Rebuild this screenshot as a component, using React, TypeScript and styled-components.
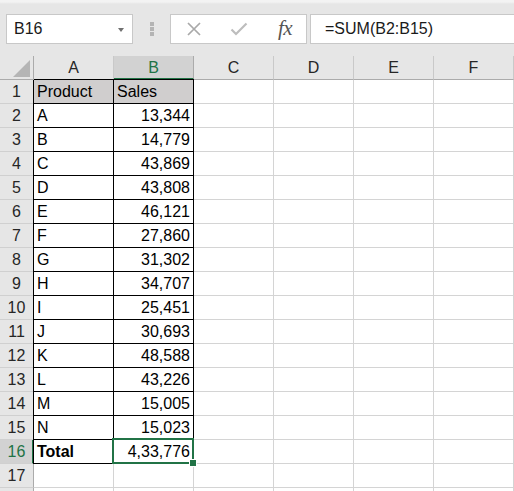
import React from "react";
import styled, { createGlobalStyle } from "styled-components";

const GlobalStyle = createGlobalStyle`
  html, body {
    margin: 0;
    padding: 0;
    background: #ffffff;
    overflow: hidden;
  }
  body {
    font-family: "Liberation Sans", Arial, sans-serif;
  }
`;

const GREEN = "#217346";
const GRID = "#d4d4d4";

const Page = styled.div`
  width: 514px;
  height: 491px;
  overflow: hidden;
  display: flex;
  flex-direction: column;
`;

const Toolbar = styled.div`
  flex-shrink: 0;
  height: 56px;
  box-sizing: border-box;
  padding: 14px 0 0 6px;
  display: flex;
  align-items: flex-start;
  background: linear-gradient(#f3f3f3 0, #f3f3f3 2px, #e6e6e6 4px);
`;

const Field = styled.div`
  height: 30px;
  box-sizing: border-box;
  background: #ffffff;
  border: 1px solid #c8c8c8;
  display: flex;
  align-items: center;
  font-size: 16px;
  color: #1a1a1a;
`;

const NameBox = styled(Field)`
  width: 127px;
  padding: 0 8px 0 7px;
  justify-content: space-between;
`;

const DropArrow = styled.span`
  width: 0;
  height: 0;
  border-left: 3.5px solid transparent;
  border-right: 3.5px solid transparent;
  border-top: 4px solid #707070;
  margin-top: 2px;
`;

const Grip = styled.div`
  width: 37px;
  height: 30px;
  display: flex;
  flex-direction: column;
  align-items: center;
  justify-content: center;
  gap: 1.5px;
`;

const GripDot = styled.span`
  width: 4px;
  height: 3.5px;
  background: #b4b4b4;
`;

const IconBox = styled(Field)`
  width: 137px;
  margin-right: 3px;
  display: grid;
  grid-template-columns: repeat(3, 1fr);
  justify-items: center;
`;

const IconSlot = styled.span`
  display: flex;
  align-items: center;
  justify-content: center;
`;

const Fx = styled.span`
  font-family: "Liberation Serif", "Times New Roman", serif;
  font-style: italic;
  font-size: 21px;
  color: #555555;
  letter-spacing: -0.5px;
  margin: -2px 0 0 3px;
`;

const FormulaBox = styled(Field)`
  flex: 1;
  margin-right: -2px;
  padding-left: 14px;
`;

const Sheet = styled.div`
  flex-shrink: 0;
  display: grid;
  grid-template-columns: 34px repeat(6, 80px);
  grid-auto-rows: 24px;
  font-size: 16px;
`;

const Corner = styled.div`
  background: #e6e6e6;
  border-right: 1px solid #ababab;
  border-bottom: 1px solid #ababab;
  box-sizing: border-box;
  display: flex;
  align-items: flex-end;
  justify-content: flex-end;
  padding: 0 3px 2px 0;
`;

const ColHead = styled.div<{ $selected?: boolean }>`
  box-sizing: border-box;
  background: ${(p) => (p.$selected ? "#d2d2d2" : "#e6e6e6")};
  color: ${(p) => (p.$selected ? GREEN : "#262626")};
  border-right: 1px solid ${(p) => (p.$selected ? "#ababab" : "#c9c9c9")};
  border-bottom: ${(p) => (p.$selected ? `2px solid ${GREEN}` : "1px solid #ababab")};
  text-align: center;
  line-height: 24px;
`;

const RowHead = styled.div<{ $selected?: boolean }>`
  box-sizing: border-box;
  background: ${(p) => (p.$selected ? "#d2d2d2" : "#e6e6e6")};
  color: ${(p) => (p.$selected ? GREEN : "#262626")};
  border-right: ${(p) => (p.$selected ? `2px solid ${GREEN}` : "1px solid #ababab")};
  border-bottom: 1px solid #d0d0d0;
  text-align: center;
  line-height: 22px;
  padding: 1px 0 0 ${(p) => (p.$selected ? 1 : 0)}px;
`;

const Cell = styled.div<{
  $table?: boolean;
  $fill?: boolean;
  $num?: boolean;
  $bold?: boolean;
  $first?: boolean;
  $top?: boolean;
  $active?: boolean;
}>`
  position: ${(p) => (p.$active ? "relative" : "static")};
  box-sizing: border-box;
  background: ${(p) => (p.$fill ? "#d0cece" : "#ffffff")};
  border-right: 1px solid ${(p) => (p.$table ? "#000000" : GRID)};
  border-bottom: 1px solid ${(p) => (p.$table ? "#000000" : GRID)};
  box-shadow: ${(p) =>
    [p.$first ? "-1px 0 0 #000" : "", p.$top ? "0 -1px 0 #000" : ""]
      .filter(Boolean)
      .join(", ") || "none"};
  padding: 1px 3px 0 3px;
  line-height: 22px;
  text-align: ${(p) => (p.$num ? "right" : "left")};
  font-weight: ${(p) => (p.$bold ? 700 : 400)};
  color: #000000;
  white-space: nowrap;

  ${(p) =>
    p.$active &&
    `
    &::after {
      content: "";
      position: absolute;
      left: -2px;
      top: -2px;
      right: -1px;
      bottom: -1px;
      border: 2px solid ${GREEN};
      z-index: 1;
    }
    &::before {
      content: "";
      position: absolute;
      left: 76px;
      top: 20px;
      width: 6px;
      height: 6px;
      background: ${GREEN};
      box-shadow: 0 0 0 1px #ffffff;
      z-index: 2;
    }
  `}
`;

const columns = ["A", "B", "C", "D", "E", "F"];

const data: [string, string][] = [
  ["A", "13,344"],
  ["B", "14,779"],
  ["C", "43,869"],
  ["D", "43,808"],
  ["E", "46,121"],
  ["F", "27,860"],
  ["G", "31,302"],
  ["H", "34,707"],
  ["I", "25,451"],
  ["J", "30,693"],
  ["K", "48,588"],
  ["L", "43,226"],
  ["M", "15,005"],
  ["N", "15,023"],
];

const CloseIcon = () => (
  <svg width="16" height="14" viewBox="0 0 16 14">
    <path d="M2 1 L14 13 M14 1 L2 13" stroke="#a9a9a9" strokeWidth="1.7" fill="none" />
  </svg>
);

const CheckIcon = () => (
  <svg width="18" height="14" viewBox="0 0 18 14">
    <path d="M1.5 7.5 L6 12 L16.5 1.5" stroke="#bdbdbd" strokeWidth="2.2" fill="none" />
  </svg>
);

const SelectAll = () => (
  <svg width="17" height="17" viewBox="0 0 17 17">
    <polygon points="17,0 17,17 0,17" fill="#b5b5b5" />
  </svg>
);

type Row = { a: string; b: string; bold?: boolean; fill?: boolean };

const rows: Row[] = [
  { a: "Product", b: "Sales", fill: true },
  ...data.map(([a, b]) => ({ a, b })),
  { a: "Total", b: "4,33,776", bold: true },
];

// 17 numbered rows fit the window; an 18th only peeks in at the bottom edge
const visibleRows = 17;

const App = () => {
  return (
    <Page>
      <GlobalStyle />
      <Toolbar>
        <NameBox>
          <span>B16</span>
          <DropArrow />
        </NameBox>
        <Grip>
          <GripDot />
          <GripDot />
          <GripDot />
        </Grip>
        <IconBox>
          <IconSlot>
            <CloseIcon />
          </IconSlot>
          <IconSlot>
            <CheckIcon />
          </IconSlot>
          <IconSlot>
            <Fx>fx</Fx>
          </IconSlot>
        </IconBox>
        <FormulaBox>=SUM(B2:B15)</FormulaBox>
      </Toolbar>

      <Sheet>
        <Corner>
          <SelectAll />
        </Corner>
        {columns.map((c) => (
          <ColHead key={c} $selected={c === "B"}>
            {c}
          </ColHead>
        ))}

        {Array.from({ length: visibleRows + 1 }, (_, i) => {
          const r = rows[i];
          const n = i + 1;
          return (
            <React.Fragment key={n}>
              <RowHead $selected={n === 16}>{n <= visibleRows ? n : ""}</RowHead>
              {r ? (
                <>
                  <Cell $table $first $top={n === 1} $fill={r.fill} $bold={r.bold}>
                    {r.a}
                  </Cell>
                  <Cell
                    $table
                    $top={n === 1}
                    $fill={r.fill}
                    $num={n > 1}
                    $active={n === 16}
                  >
                    {r.b}
                  </Cell>
                </>
              ) : (
                <>
                  <Cell />
                  <Cell />
                </>
              )}
              {columns.slice(2).map((c) => (
                <Cell key={c} />
              ))}
            </React.Fragment>
          );
        })}
      </Sheet>
    </Page>
  );
};

export default App;
